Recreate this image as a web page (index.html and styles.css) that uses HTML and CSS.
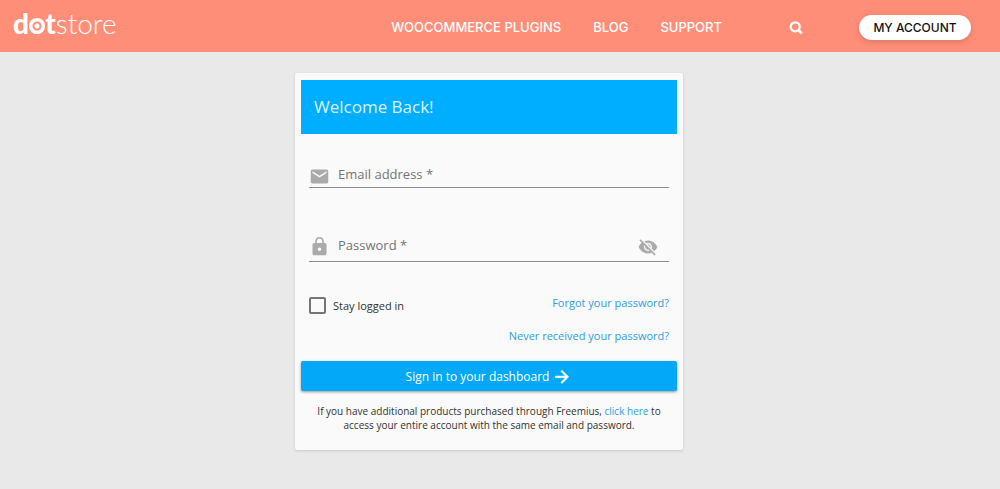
FILE: index.html
```html
<!DOCTYPE html>
<html lang="en">
<head>
    <meta charset="UTF-8">
    <meta name="viewport" content="width=device-width, initial-scale=1.0">
    <title>Dotstore - My Account</title>
    <link rel="stylesheet" href="styles.css">
</head>
<body>
    <header class="site-header">
        <a href="#" class="logo"><strong>d<span class="logo-o">o</span>t</strong>store</a>
        <nav class="main-nav">
            <a href="#">WOOCOMMERCE PLUGINS</a>
            <a href="#">BLOG</a>
            <a href="#">SUPPORT</a>
        </nav>
        <button type="button" class="search-btn" aria-label="Search">
            <svg width="14" height="14" viewBox="0 0 14 14" fill="none" stroke="currentColor" stroke-width="2.2">
                <circle cx="6.2" cy="6.8" r="4.5"/>
                <path d="M9.4 10l3.4 3.4" stroke-width="2.6"/>
            </svg>
        </button>
        <a href="#" class="account-btn">MY ACCOUNT</a>
    </header>
    <main>
        <form class="login-card">
            <h1 class="card-title">Welcome Back!</h1>
            <div class="fields">
                <div class="field">
                    <label for="email" aria-label="Email address">
                        <svg width="21" height="21" viewBox="0 0 24 24" fill="currentColor"><path d="M20 4H4c-1.1 0-1.99.9-1.99 2L2 18c0 1.1.9 2 2 2h16c1.1 0 2-.9 2-2V6c0-1.1-.9-2-2-2zm0 4l-8 5-8-5V6l8 5 8-5v2z"/></svg>
                    </label>
                    <input type="email" id="email" placeholder="Email address *">
                </div>
                <div class="field field-password">
                    <label for="password" aria-label="Password">
                        <svg width="21" height="21" viewBox="0 0 24 24" fill="currentColor"><path d="M18 8h-1V6c0-2.76-2.24-5-5-5S7 3.24 7 6v2H6c-1.1 0-2 .9-2 2v10c0 1.1.9 2 2 2h12c1.1 0 2-.9 2-2V10c0-1.1-.9-2-2-2zm-6 9c-1.1 0-2-.9-2-2s.9-2 2-2 2 .9 2 2-.9 2-2 2zm3.1-9H8.9V6c0-1.71 1.39-3.1 3.1-3.1 1.71 0 3.1 1.39 3.1 3.1v2z"/></svg>
                    </label>
                    <input type="password" id="password" placeholder="Password *">
                    <button type="button" class="toggle-btn" aria-label="Show password">
                        <svg width="20" height="20" viewBox="0 0 24 24" fill="currentColor" stroke="currentColor" stroke-width=".4"><path d="M12 7c2.76 0 5 2.24 5 5 0 .65-.13 1.26-.36 1.83l2.92 2.92c1.51-1.26 2.7-2.89 3.43-4.75-1.73-4.39-6-7.5-11-7.5-1.4 0-2.74.25-3.98.7l2.16 2.16C10.74 7.13 11.35 7 12 7zM2 4.27l2.28 2.28.46.46C3.08 8.3 1.78 10.02 1 12c1.73 4.39 6 7.5 11 7.5 1.55 0 3.03-.3 4.38-.84l.42.42L19.73 22 21 20.73 3.27 3 2 4.27zM7.53 9.8l1.55 1.55c-.05.21-.08.43-.08.65 0 1.66 1.34 3 3 3 .22 0 .44-.03.65-.08l1.55 1.55c-.67.33-1.41.53-2.2.53-2.76 0-5-2.24-5-5 0-.79.2-1.53.53-2.2zm4.31-.78l3.15 3.15.02-.16c0-1.66-1.34-3-3-3l-.17.01z"/></svg>
                    </button>
                </div>
                <div class="options">
                    <label class="stay"><input type="checkbox"> Stay logged in</label>
                    <div class="links">
                        <a href="#">Forgot your password?</a>
                        <a href="#">Never received your password?</a>
                    </div>
                </div>
            </div>
            <button type="submit" class="submit-btn">
                Sign in to your dashboard
                <svg width="20" height="20" viewBox="0 0 24 24" fill="currentColor" stroke="currentColor" stroke-width=".6"><path d="M12 5l-1.41 1.41L16.17 12H4v2h12.17l-5.58 5.59L12 21l8-8z"/></svg>
            </button>
            <p class="note">If you have additional products purchased through Freemius, <a href="#">click here</a> to access your entire account with the same email and password.</p>
        </form>
    </main>
</body>
</html>
```

FILE: styles.css
```css
* {
    box-sizing: border-box;
}
body {
    margin: 0;
    background-color: #e9e9e9;
    color: #333;
    font-family: "Open Sans", sans-serif;
}
a {
    color: #2d9fe3;
    text-decoration: none;
}
svg {
    display: block;
}
button {
    border: none;
    background: none;
    padding: 0;
    font-family: inherit;
    cursor: pointer;
}

/* header */
.site-header {
    display: flex;
    align-items: center;
    height: 52px;
    padding: 2px 29px 0 13px;
    background-color: #ff8e78;
    color: #fff;
    font-family: Inter, sans-serif;
}
.logo {
    color: #fff;
    font-family: Lato, sans-serif;
    font-size: 28px;
    font-weight: 300;
    line-height: 32px;
    padding-bottom: 8px;
}
.logo strong {
    font-weight: 900;
}
.logo-o {
    position: relative;
}
/* target-like "o": disc, ring and centre dot */
.logo-o::after {
    content: "";
    position: absolute;
    left: 50%;
    bottom: 6px;
    width: 16px;
    height: 16px;
    margin-left: -8px;
    border-radius: 50%;
    background: radial-gradient(circle, #fff 2px, #ff8e78 3px, #ff8e78 4px, #fff 5px);
}
.main-nav {
    display: flex;
    gap: 32px;
    margin-left: auto;
}
.main-nav a {
    color: #fff;
    font-size: 13px;
    font-weight: 500;
}
.search-btn {
    color: #fff;
    margin: 0 56px 0 67px;
}
.account-btn {
    width: 112px;
    border-radius: 13px;
    background-color: #fff;
    box-shadow: 0 2px 6px rgba(0,0,0,0.16);
    color: #111;
    font-size: 12px;
    font-weight: 500;
    line-height: 25px;
    text-align: center;
}

/* login card */
main {
    padding: 21px 22px 38px 0;
}
.login-card {
    max-width: 388px;
    margin: 0 auto;
    padding: 7px 6px 18px;
    border-radius: 2px;
    background-color: #fafafa;
    box-shadow: 0 1px 3px rgba(0,0,0,0.14);
}
.card-title {
    margin: 0;
    padding: 0 13px;
    background-color: #00aeff;
    color: rgba(255,255,255,0.87);
    font-size: 17px;
    font-weight: 400;
    line-height: 54px;
}
.fields {
    padding: 27px 8px 0;
}
.field {
    display: flex;
    align-items: center;
    height: 27px;
    border-bottom: 1px solid #8c8c8c;
    color: #aaa;
}
.field label {
    padding-top: 4px;
}
.field input {
    flex: 1;
    min-width: 0;
    border: none;
    outline: none;
    background: none;
    padding: 0 8px;
    color: #333;
    font-family: inherit;
    font-size: 13px;
}
.field input::placeholder {
    color: #757575;
    opacity: 1;
}
.field-password {
    height: 34px;
    margin-top: 40px;
}
.toggle-btn {
    color: #aaa;
    padding: 4px 11px 0 0;
}
.options {
    display: flex;
    justify-content: space-between;
    align-items: flex-start;
    padding: 33px 0 17px;
    font-size: 11px;
}
.stay {
    display: flex;
    align-items: center;
    gap: 7px;
    padding-top: 2px;
}
.stay input {
    appearance: none;
    width: 17px;
    height: 17px;
    margin: 0;
    border: 2px solid #757575;
    border-radius: 2px;
}
.stay input:checked {
    background-color: #03a9f4;
}
.links {
    display: flex;
    flex-direction: column;
    align-items: flex-end;
    gap: 17px;
    line-height: 16px;
}
.submit-btn {
    display: flex;
    align-items: center;
    justify-content: center;
    gap: 3px;
    width: 100%;
    height: 30px;
    border-radius: 2px;
    background-color: #03a9f8;
    box-shadow: 0 1px 3px rgba(0,0,0,0.4);
    color: #fff;
    font-size: 12px;
    font-weight: 500;
}
.note {
    margin: 13px 14px 0;
    font-size: 10px;
    line-height: 14px;
    text-align: center;
}
```
